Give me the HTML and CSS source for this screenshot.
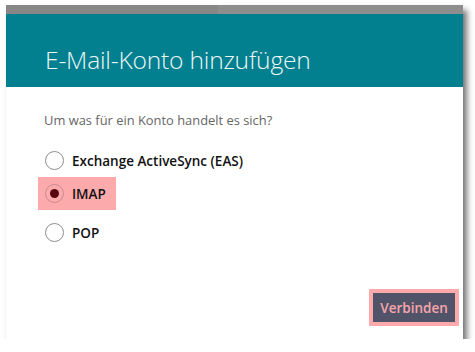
FILE: index.html
```html
<!DOCTYPE html>
<html lang="de">

<head>
    <meta charset="UTF-8">
    <title>E-Mail-Konto hinzufügen</title>
    <link rel="stylesheet" href="styles.css">
</head>

<body>
    <div class="dialog">
        <div class="topbar"></div>

        <div class="header">
            <h1>E-Mail-Konto hinzufügen</h1>
        </div>

        <div class="content">
            <p class="question">Um was für ein Konto handelt es sich?</p>

            <div class="opt opt1">
                <span class="radio"></span>
                <span class="lbl">Exchange ActiveSync (EAS)</span>
            </div>
            <div class="opt opt2 on">
                <span class="radio"></span>
                <span class="lbl">IMAP</span>
            </div>
            <div class="opt opt3">
                <span class="radio"></span>
                <span class="lbl">POP</span>
            </div>

            <div class="footer">
                <button class="btn">Verbinden</button>
            </div>
        </div>
    </div>
</body>

</html>
```

FILE: styles.css
```css
/* 기본 */
body {
    margin: 0;
    background: #fff;
    font-family: "Open Sans", "Noto Sans", sans-serif;
}

/* 대화상자 틀 */
.dialog {
    width: 457px;
    height: 334px;
    margin: 5px 0 0 6px;
    background: #fff;
    display: flex;
    flex-direction: column;
    box-shadow: 4px 5px 6px rgba(0, 0, 0, 0.55);
}

.topbar {
    height: 9px;
    background: linear-gradient(to right, #878787 212px, #8e8e8e 212px);
}

/* 제목 */
.header {
    height: 73px;
    background: #02808f;
}

.header h1 {
    margin: 0;
    padding: 29px 0 0 39px;
    font-weight: 300;
    font-size: 24.6px;
    color: #eef6f7;
    letter-spacing: -0.2px;
}

/* 본문 */
.content {
    flex: 1;
    display: flex;
    flex-direction: column;
    padding: 0 4px 13px 32px;
}

.question {
    margin: 24px 0 0 6px;
    font-size: 12.9px;
    color: #666;
}

/* 라디오 */
.opt {
    display: flex;
    align-items: center;
    align-self: flex-start;
    height: 33px;
    padding: 0 10px 0 7px;
    font-weight: 600;
    font-size: 13.5px;
    color: #111;
}

.opt1 {
    margin-top: 15px;
}

.opt3 {
    margin-top: 6px;
}

.opt.on {
    background: #fdaaac;
}

.radio {
    width: 17px;
    height: 17px;
    border: 1.5px solid #8e8e8e;
    border-radius: 50%;
    margin-right: 8px;
    position: relative;
    background: #fff;
}

.on .radio {
    background: transparent;
    border-color: #c98a8e;
}

.on .radio::after {
    content: "";
    position: absolute;
    left: 4px;
    top: 4px;
    width: 9px;
    height: 9px;
    border-radius: 50%;
    background: #5a0610;
}

/* 버튼 */
.footer {
    margin-top: auto;
    display: flex;
    justify-content: flex-end;
}

.btn {
    border: 4px solid #fdaaac;
    background: #515468;
    color: #f7a6ab;
    font-family: inherit;
    font-weight: 600;
    font-size: 13.5px;
    height: 37px;
    width: 90px;
    padding: 0;
}
```
